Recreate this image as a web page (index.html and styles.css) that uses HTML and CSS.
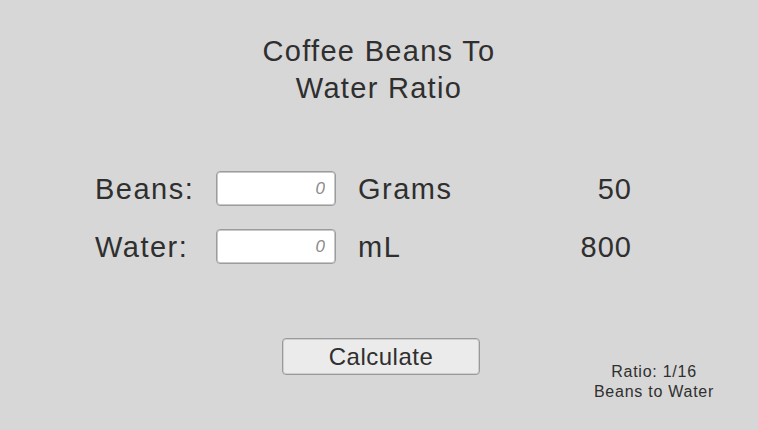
FILE: index.html
```html
<!DOCTYPE html>
<html lang="en">
<head>
<meta charset="utf-8">
<title>Coffee Beans To Water Ratio</title>
<link rel="stylesheet" href="styles.css">
</head>
<body>
<main class="app">
  <h1 class="title">Coffee Beans To<br>Water Ratio</h1>
  <section class="form">
    <label class="label" for="beans">Beans:</label>
    <input class="field" id="beans" type="text" placeholder="0">
    <span class="unit">Grams</span>
    <span class="value">50</span>

    <label class="label" for="water">Water:</label>
    <input class="field" id="water" type="text" placeholder="0">
    <span class="unit">mL</span>
    <span class="value">800</span>
  </section>
  <section class="actions">
    <button class="calc" type="button">Calculate</button>
    <p class="ratio">Ratio: 1/16<br>Beans to Water</p>
  </section>
</main>
</body>
</html>
```
FILE: styles.css
```css
html, body {
  margin: 0;
  padding: 0;
  background: #d7d7d7;
}

.app {
  width: 758px;
  height: 430px;
  display: flex;
  flex-direction: column;
  font-family: "Liberation Sans", Arial, sans-serif;
  color: #2f2f2f;
}

.title {
  margin: 33px 0 0 0;
  font-size: 29px;
  font-weight: normal;
  line-height: 37px;
  letter-spacing: 1.3px;
  text-align: center;
}

.form {
  margin-top: 64px;
  padding-left: 95px;
  display: grid;
  grid-template-columns: 121px 120px 22px 142px 132px;
  grid-auto-rows: 35px;
  row-gap: 23px;
  align-items: center;
  font-size: 29px;
  letter-spacing: 1.5px;
  line-height: 38px;
}

.label {
  grid-column: 1;
}

.field {
  grid-column: 2;
  box-sizing: border-box;
  width: 120px;
  height: 35px;
  margin: 0;
  padding: 0 10px 0 0;
  border: 1px solid #9c9c9c;
  border-radius: 4px;
  background: #ffffff;
  box-shadow: inset 0 0 0 1px #c8c8c8;
  font-family: "Liberation Sans", Arial, sans-serif;
  font-size: 17px;
  text-align: right;
  color: #323232;
  outline: none;
}

.field::placeholder {
  color: #8a8a8a;
  font-style: italic;
}

.unit {
  grid-column: 4;
}

.value {
  grid-column: 5;
  text-align: right;
  letter-spacing: 1px;
}

.actions {
  margin-top: 74px;
  display: grid;
  grid-template-columns: 282px 198px 1fr;
  align-items: start;
}

.calc {
  grid-column: 2;
  box-sizing: border-box;
  width: 198px;
  height: 37px;
  margin: 0;
  padding: 1px 0 0 0;
  border: 1px solid #9a9a9a;
  border-radius: 4px;
  background: #ebebeb;
  box-shadow: inset 0 0 0 1px #cfcfcf;
  font-family: "Liberation Sans", Arial, sans-serif;
  font-size: 24px;
  letter-spacing: 0.5px;
  color: #2f2f2f;
}

.ratio {
  grid-column: 3;
  margin: 24px 0 0 0;
  padding-left: 70px;
  font-size: 16px;
  line-height: 20px;
  letter-spacing: 0.75px;
  text-align: center;
}
```
